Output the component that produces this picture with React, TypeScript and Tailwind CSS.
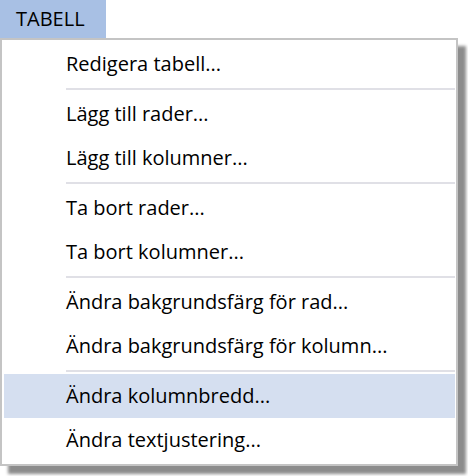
const groups = [
  ["Redigera tabell..."],
  ["Lägg till rader...", "Lägg till kolumner..."],
  ["Ta bort rader...", "Ta bort kolumner..."],
  ["Ändra bakgrundsfärg för rad...", "Ändra bakgrundsfärg för kolumn..."],
  ["Ändra kolumnbredd...", "Ändra textjustering..."],
];

const active = "Ändra kolumnbredd...";

export default function App() {
  return (
    <div className="w-[468px] h-[476px] bg-white font-['Open_Sans',sans-serif] text-black">
      <div className="w-[106px] h-[38px] bg-[#a8c0e4] pl-4 flex items-center text-[20px] leading-none">
        TABELL
      </div>
      <div className="w-[458px] border-2 border-[#c4c4c4] pl-[2px] pr-[1px] py-[2px] bg-white shadow-[8px_8px_3px_rgba(0,0,0,0.45)]">
        {groups.map((group, gi) => (
          <div key={gi}>
            {gi > 0 && <div className="ml-[62px] h-[2px] bg-[#e0e0e6] my-[2px]" />}
            {group.map((label) => (
              <div
                key={label}
                className={
                  "h-[44px] pl-[62px] flex items-center text-[20px] leading-none " +
                  (label === active ? "bg-[#d5dff0]" : "")
                }
              >
                {label}
              </div>
            ))}
          </div>
        ))}
      </div>
    </div>
  );
}
